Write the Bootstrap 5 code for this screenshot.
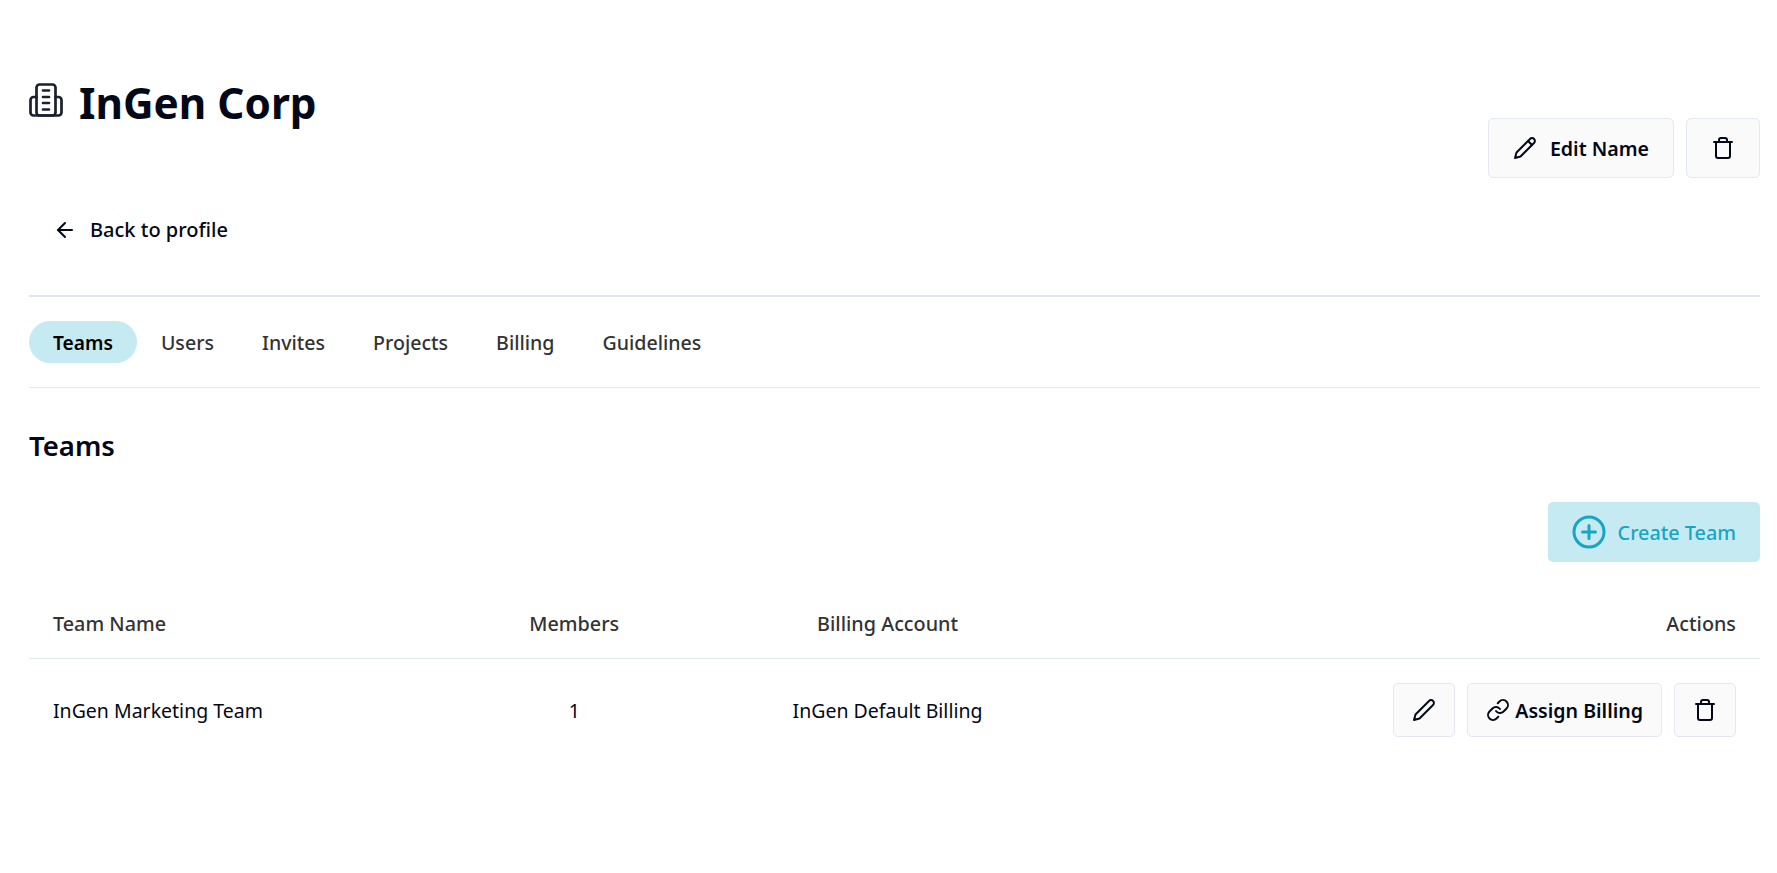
<!DOCTYPE html>
<html lang="en">
<head>
  <meta charset="UTF-8">
  <meta name="viewport" content="width=device-width, initial-scale=1.0">
  <title>InGen Corp</title>
  <link href="https://cdn.jsdelivr.net/npm/bootstrap@5.3.1/dist/css/bootstrap.min.css" rel="stylesheet">
  <style>
    body {
      font-family: "Noto Sans", "Open Sans", sans-serif;
      color: #020817;
      background: #fff;
    }
    .page-wrap { padding: 67px 17px 0 29px; }
    .org-title { font-size: 42.3px; font-weight: 700; line-height: 72px; margin: 0; }
    .org-head { height: 111px; }
    .org-icon { margin-top: 16px; }
    .btn-soft {
      background: #fafafa;
      border: 1px solid #e2e8f0;
      border-radius: 5px;
      color: #020817;
      font-weight: 600;
      font-size: 19.6px;
      line-height: 1;
    }
    .btn-soft:hover { background: #f1f5f9; color: #020817; }
    .btn-label { padding-top: 2px; }
    .btn-top { height: 60px; padding: 0 24px; gap: 13px; }
    .btn-row { height: 54px; padding: 0 18px; gap: 5px; }
    .back-link { color: #020817; font-size: 20px; font-weight: 500; padding: 0 24px; gap: 13px; height: 60px; text-decoration: none; margin-top: 22px; }
    .main-rule { border-top: 2px solid #e2e8f0; margin-top: 35px; }
    .tab-bar { border-bottom: 1px solid #e2e8f0; padding: 24px 0; }
    .tab-item { color: #333; font-size: 19.6px; font-weight: 500; padding: 2px 24px 0; height: 42px; border-radius: 21px; text-decoration: none; display: flex; align-items: center; }
    .tab-item.is-on { background: #c5eaf2; color: #000; font-weight: 600; font-size: 19.2px; }
    .sect-title { font-size: 27.5px; font-weight: 600; line-height: 40px; margin: 38px 0 0; }
    .btn-create { background: #c5eaf2; color: #17a5c6; font-size: 19.8px; font-weight: 500; border: 0; border-radius: 5px; height: 60px; padding: 0 24px; gap: 12px; }
    .btn-create:hover { background: #c5eaf2; color: #17a5c6; }
    .create-row { margin-top: 36px; }
    .team-table { margin: 28px 0 0; table-layout: fixed; width: 100%; }
    .team-table th { color: #333; font-size: 19.8px; font-weight: 500; height: 68px; padding: 0 24px; border-bottom: 1px solid #e2e8f0; vertical-align: middle; }
    .team-table td { font-size: 19.5px; height: 104px; padding: 0 24px; border: 0; vertical-align: middle; color: #020817; }
    .team-cell { padding-top: 2px; }
    .act-group { gap: 12px; }
    .col-name { width: 26%; }
    .col-members { width: 11%; }
    .col-billing { width: 25.2%; }
  </style>
</head>
<body>

<div class="page-wrap">
  <div class="d-flex justify-content-between org-head">
    <div class="d-flex align-items-start gap-3">
      <svg class="org-icon" width="34" height="34" viewBox="0 0 34 34" fill="none" stroke="#1a202c" stroke-width="2.700" stroke-linecap="round" stroke-linejoin="round">
        <rect x="7.500" y="1.500" width="19" height="31" rx="3"/>
        <path d="M7.500 14H4.500a3 3 0 0 0-3 3v12.500a3 3 0 0 0 3 3h25a3 3 0 0 0 3-3V17a3 3 0 0 0-3-3h-3"/>
        <path d="M14 7.500h6M14 14h6M14 20h6M14 26.500h6"/>
      </svg>
      <h1 class="org-title">InGen Corp</h1>
    </div>
    <div class="d-flex act-group align-items-end">
      <button class="btn btn-soft btn-top d-flex align-items-center">
        <svg width="24" height="24" viewBox="0 0 24 24" fill="none" stroke="#020817" stroke-width="2" stroke-linecap="round" stroke-linejoin="round"><path d="M17 3a2.830 2.830 0 1 1 4 4L7.500 20.500 2 22l1.500-5.500Z"/><path d="m15 5 4 4"/></svg>
        <span class="btn-label">Edit Name</span>
      </button>
      <button class="btn btn-soft btn-top d-flex align-items-center">
        <svg width="24" height="24" viewBox="0 0 24 24" fill="none" stroke="#020817" stroke-width="2" stroke-linecap="round" stroke-linejoin="round"><path d="M3 6h18"/><path d="M19 6v14a2 2 0 0 1-2 2H7a2 2 0 0 1-2-2V6"/><path d="M8 6V4a2 2 0 0 1 2-2h4a2 2 0 0 1 2 2v2"/></svg>
      </button>
    </div>
  </div>

  <a href="#" class="back-link d-inline-flex align-items-center">
    <svg width="24" height="24" viewBox="0 0 24 24" fill="none" stroke="#020817" stroke-width="2" stroke-linecap="round" stroke-linejoin="round"><path d="M12 19l-7-7 7-7"/><path d="M19 12H5"/></svg>
    Back to profile
  </a>

  <div class="main-rule"></div>

  <nav class="tab-bar d-flex">
    <a href="#" class="tab-item is-on">Teams</a>
    <a href="#" class="tab-item">Users</a>
    <a href="#" class="tab-item">Invites</a>
    <a href="#" class="tab-item">Projects</a>
    <a href="#" class="tab-item">Billing</a>
    <a href="#" class="tab-item">Guidelines</a>
  </nav>

  <h2 class="sect-title">Teams</h2>

  <div class="d-flex justify-content-end create-row">
    <button class="btn btn-create d-flex align-items-center">
      <svg width="34" height="34" viewBox="0 0 34 34" fill="none" stroke="#17a5c6" stroke-width="3" stroke-linecap="round"><circle cx="17" cy="17" r="15"/><path d="M17 10.500v13M10.500 17h13"/></svg>
      <span class="btn-label">Create Team</span>
    </button>
  </div>

  <table class="table team-table">
    <colgroup>
      <col class="col-name">
      <col class="col-members">
      <col class="col-billing">
      <col>
    </colgroup>
    <thead>
      <tr>
        <th>Team Name</th>
        <th class="text-center">Members</th>
        <th class="text-center">Billing Account</th>
        <th class="text-end">Actions</th>
      </tr>
    </thead>
    <tbody>
      <tr>
        <td><span class="team-cell">InGen Marketing Team</span></td>
        <td class="text-center">1</td>
        <td class="text-center">InGen Default Billing</td>
        <td>
          <div class="d-flex justify-content-end act-group">
            <button class="btn btn-soft btn-row d-flex align-items-center">
              <svg width="24" height="24" viewBox="0 0 24 24" fill="none" stroke="#020817" stroke-width="2" stroke-linecap="round" stroke-linejoin="round"><path d="M17 3a2.830 2.830 0 1 1 4 4L7.500 20.500 2 22l1.500-5.500Z"/></svg>
            </button>
            <button class="btn btn-soft btn-row d-flex align-items-center">
              <svg width="24" height="24" viewBox="0 0 24 24" fill="none" stroke="#020817" stroke-width="2" stroke-linecap="round" stroke-linejoin="round"><path d="M10 13a5 5 0 0 0 7.540.540l3-3a5 5 0 0 0-7.070-7.070l-1.720 1.710"/><path d="M14 11a5 5 0 0 0-7.540-.540l-3 3a5 5 0 0 0 7.070 7.070l1.710-1.710"/></svg>
              <span class="btn-label">Assign Billing</span>
            </button>
            <button class="btn btn-soft btn-row d-flex align-items-center">
              <svg width="24" height="24" viewBox="0 0 24 24" fill="none" stroke="#020817" stroke-width="2" stroke-linecap="round" stroke-linejoin="round"><path d="M3 6h18"/><path d="M19 6v14a2 2 0 0 1-2 2H7a2 2 0 0 1-2-2V6"/><path d="M8 6V4a2 2 0 0 1 2-2h4a2 2 0 0 1 2 2v2"/></svg>
            </button>
          </div>
        </td>
      </tr>
    </tbody>
  </table>
</div>

</body>
</html>
